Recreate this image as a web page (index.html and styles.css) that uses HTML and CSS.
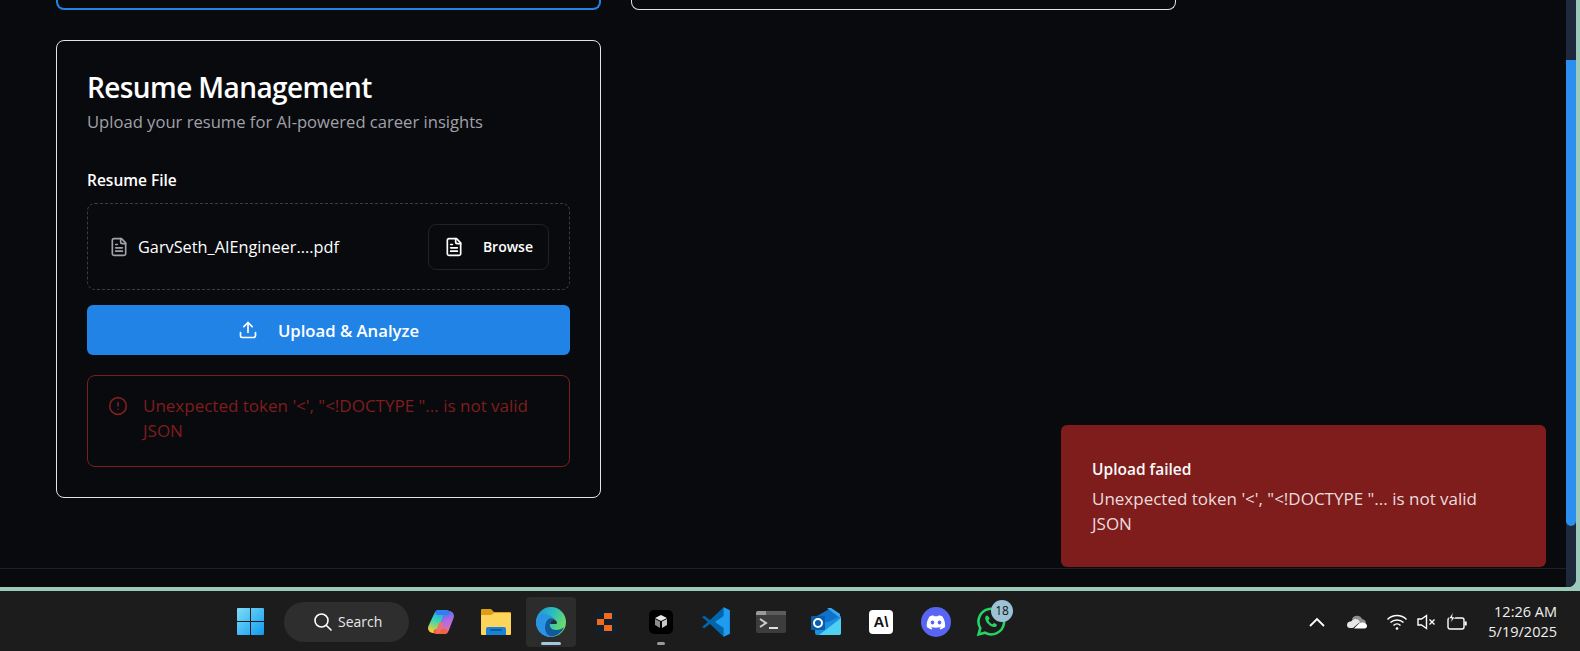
FILE: index.html
```html
<!DOCTYPE html>
<html>
<head>
	<meta charset="utf-8">
	<title>Resume Management</title>
	<link rel="stylesheet" href="styles.css">
</head>
<body>
	<div class="window">
		<div class="page">
			<main class="content">
				<div class="topRow">
					<div class="topCard topCard-blue"></div>
					<div class="topCard"></div>
				</div>
				<section class="card">
					<h2 class="cardTitle">Resume Management</h2>
					<p class="cardSub">Upload your resume for AI-powered career insights</p>
					<div class="fileLabel">Resume File</div>
					<div class="dropBox">
						<div class="fileName">
							<svg class="icon icon-gray" viewBox="0 0 24 24"><path d="M15 2H6a2 2 0 0 0-2 2v16a2 2 0 0 0 2 2h12a2 2 0 0 0 2-2V7z"/><path d="M14 2v4a2 2 0 0 0 2 2h4"/><path d="M16 13H8M16 17H8M10 9H8"/></svg>
							<span>GarvSeth_AIEngineer....pdf</span>
						</div>
						<div class="browseBtn">
							<svg class="icon" viewBox="0 0 24 24"><path d="M15 2H6a2 2 0 0 0-2 2v16a2 2 0 0 0 2 2h12a2 2 0 0 0 2-2V7z"/><path d="M14 2v4a2 2 0 0 0 2 2h4"/><path d="M16 13H8M16 17H8M10 9H8"/></svg>
							<span>Browse</span>
						</div>
					</div>
					<div class="uploadBtn">
						<svg class="icon" viewBox="0 0 24 24"><path d="M21 15v4a2 2 0 0 1-2 2H5a2 2 0 0 1-2-2v-4"/><path d="M17 8l-5-5-5 5"/><path d="M12 3v12"/></svg>
						<span>Upload &amp; Analyze</span>
					</div>
					<div class="errorBox">
						<svg class="icon icon-err" viewBox="0 0 24 24"><circle cx="12" cy="12" r="10"/><path d="M12 8v4M12 16h.01"/></svg>
						<p>Unexpected token '&lt;', "&lt;!DOCTYPE "... is not valid JSON</p>
					</div>
				</section>
			</main>
			<footer class="pageFoot"></footer>
			<div class="toast">
				<div class="toastTitle">Upload failed</div>
				<div class="toastMsg">Unexpected token '&lt;', "&lt;!DOCTYPE "... is not valid JSON</div>
			</div>
		</div>
		<div class="scrollbar"><div class="thumb"></div></div>
	</div>

	<div class="taskbar">
		<div class="slot">
			<svg width="30" height="30" viewBox="0 0 30 30">
				<defs><linearGradient id="win" x1="0" y1="0" x2="1" y2="1"><stop offset="0" stop-color="#7fdcf8"/><stop offset="1" stop-color="#0f9bf0"/></linearGradient></defs>
				<path fill="url(#win)" d="M2 1h12v13H1V2a1 1 0 0 1 1-1zM15 1h12a1 1 0 0 1 1 1v12H15zM1 15h13v13H2a1 1 0 0 1-1-1zM15 15h13v12a1 1 0 0 1-1 1H15z"/>
			</svg>
		</div>
		<div class="searchPill">
			<svg width="20" height="20" viewBox="0 0 20 20" fill="none" stroke="#fff" stroke-width="1.6"><circle cx="8.500" cy="8.500" r="6.500"/><path d="M13.200 13.200l5.300 5.300"/></svg>
			<span>Search</span>
		</div>
		<div class="slot">
			<svg width="30" height="30" viewBox="0 0 30 30" fill="none" stroke-linecap="round">
				<defs>
					<linearGradient id="copA" gradientUnits="userSpaceOnUse" x1="14" y1="4" x2="7" y2="25"><stop offset="0" stop-color="#2a9df0"/><stop offset=".5" stop-color="#3fd8b0"/><stop offset="1" stop-color="#f6cf2e"/></linearGradient>
					<linearGradient id="copB" gradientUnits="userSpaceOnUse" x1="17" y1="5" x2="24" y2="26"><stop offset="0" stop-color="#5a6cf0"/><stop offset=".5" stop-color="#b86be0"/><stop offset="1" stop-color="#f0709a"/></linearGradient>
				</defs>
				<path stroke="url(#copA)" stroke-width="10" d="M13 8L7 21"/>
				<path stroke="url(#copB)" stroke-width="10" d="M23 9L18 22"/>
				<path stroke="#2f7ff0" stroke-width="5" d="M12 5.500h9"/>
				<path stroke="#f0643c" stroke-width="5" d="M10 24.500h9"/>
				<path stroke="#f0706a" stroke-width="4" d="M15 17l-3 7"/>
			</svg>
		</div>
		<div class="slot">
			<svg width="30" height="30" viewBox="0 0 30 30">
				<path fill="#dc9f16" d="M0 3a1 1 0 0 1 1-1h9l3 3h16a1 1 0 0 1 1 1v6H0z"/>
				<path fill="#fdd45c" d="M0 8h10l3-2h16a1 1 0 0 1 1 1v20a1 1 0 0 1-1 1H1a1 1 0 0 1-1-1z"/>
				<path fill="#1683d8" d="M5 28v-6a2 2 0 0 1 2-2h16a2 2 0 0 1 2 2v6z"/>
				<rect x="9" y="22" width="12" height="2" rx="1" fill="#0c5aa0"/>
			</svg>
		</div>
		<div class="slot slot-active">
			<svg width="30" height="30" viewBox="0 0 30 30">
				<defs>
					<linearGradient id="edgeA" x1="0" y1="0" x2="1" y2=".5"><stop offset="0" stop-color="#1b8fe2"/><stop offset=".55" stop-color="#2cc0b8"/><stop offset="1" stop-color="#6fdc68"/></linearGradient>
				</defs>
				<circle cx="15" cy="15" r="15" fill="url(#edgeA)"/>
				<path fill="#2b93e4" d="M0 15C0 9 5 6 10 7c4 1 7 3 8 5-4-2-9 0-9 5 0 5 4 10 10 12-1 .6-3 1-4 1C6 30 0 23 0 15z"/>
				<path fill="#11599f" d="M10 15c1-3 5-5 8-3 2 1 3 3 2 5h-6c-1 3 2 6 6 6 3 0 6-1 8-3-2 6-8 10-14 9-5-2-6-9-4-14z"/>
				<path fill="#2c2c2c" d="M15 15c1-2 4-2 5-1 1 1 1 2 .500 3H14.500z"/>
			</svg>
			<i class="runBar runBar-wide"></i>
		</div>
		<div class="slot">
			<svg width="22" height="24" viewBox="0 0 22 24">
				<rect width="22" height="24" rx="2" fill="#13202c"/>
				<rect x="2" y="9" width="7" height="6" fill="#f26a1b"/>
				<rect x="9" y="3" width="8" height="6" fill="#f26a1b"/>
				<rect x="9" y="15" width="8" height="6" fill="#f26a1b"/>
			</svg>
		</div>
		<div class="slot">
			<svg width="24" height="24" viewBox="0 0 24 24">
				<rect width="24" height="24" rx="5" fill="#000"/>
				<path fill="#e8e8e8" d="M12 5l6 3-6 3-6-3z"/>
				<path fill="#8c8c8c" d="M6 9l5 2.600V18l-5-3z"/>
				<path fill="#c8c8c8" d="M18 9l-5 2.600V18l5-3z"/>
			</svg>
			<i class="runBar"></i>
		</div>
		<div class="slot">
			<svg width="30" height="30" viewBox="0 0 30 30">
				<path fill="#0065a9" d="M28.800 3.300L22.600.300 9 13 3.300 8.700 1 10l5.800 5L1 20l2.300 1.300L9 17l13.600 12.700 6.200-3z"/>
				<path fill="#1f9cf0" d="M22.600.300l6.200 3v23.400l-6.200 3V21L14 15l8.600-6z"/>
			</svg>
		</div>
		<div class="slot">
			<svg width="30" height="22" viewBox="0 0 30 22">
				<rect width="30" height="22" rx="2" fill="#3d3d3d"/>
				<path d="M0 2a2 2 0 0 1 2-2h8v4H0z" fill="#9a9a9a"/>
				<rect x="10" y="0" width="20" height="4" fill="#5c5c5c"/>
				<path d="M4 8l6 4-6 4" fill="none" stroke="#cfcfcf" stroke-width="2"/>
				<rect x="13" y="16" width="9" height="2" fill="#e0e0e0"/>
			</svg>
		</div>
		<div class="slot">
			<svg width="30" height="28" viewBox="0 0 30 28">
				<path fill="#0f72c8" d="M6 8l14-8 9 6v8H6z"/>
				<path fill="#38a8ee" d="M16 0h4l9 6v4z"/>
				<path fill="#1b8fe0" d="M4 14l13 0 13-6v17a2 2 0 0 1-2 2H6a2 2 0 0 1-2-2z"/>
				<path fill="#4fd0f2" d="M30 10v15a2 2 0 0 1-2 2H8z"/>
				<rect y="8" width="14" height="14" rx="1" fill="#0a5cae"/>
				<circle cx="7" cy="15" r="4" fill="none" stroke="#fff" stroke-width="2"/>
			</svg>
		</div>
		<div class="slot">
			<div class="anthro">A\</div>
		</div>
		<div class="slot">
			<svg width="30" height="30" viewBox="0 0 30 30">
				<circle cx="15" cy="15" r="15" fill="#5865f2"/>
				<path fill="#fff" d="M21.500 9.500c-1.200-.6-2.500-1-3.900-1.200l-.5 1c-1.400-.2-2.800-.2-4.200 0l-.5-1c-1.400.2-2.700.6-3.900 1.200-2.400 3.600-3.100 7.100-2.700 10.600 1.600 1.200 3.200 1.900 4.700 2.300l1-1.600c-.6-.2-1.100-.5-1.600-.8l.4-.3c3 1.400 6.300 1.400 9.300 0l.4.3c-.5.300-1 .6-1.600.8l1 1.600c1.500-.4 3.100-1.100 4.700-2.300.4-4-.7-7.500-2.600-10.600z"/>
				<ellipse cx="11.500" cy="15.500" rx="1.800" ry="2" fill="#5865f2"/>
				<ellipse cx="18.500" cy="15.500" rx="1.800" ry="2" fill="#5865f2"/>
			</svg>
		</div>
		<div class="slot">
			<svg width="30" height="30" viewBox="0 0 30 30">
				<path fill="none" stroke="#25d366" stroke-width="2.600" d="M2.500 27.500l1.800-6.400A12.800 12.800 0 1 1 9 25.700z"/>
				<path fill="#25d366" d="M11 8.500c-.5 0-1.500.5-1.800 2-.3 2 1 4.500 3 6.500s4.500 3.300 6.500 3c1.500-.3 2.300-1.300 2.300-2 0-.5-2.500-2-3-2-.5 0-1 1.300-1.600 1.300-1.400-.3-3.500-2.400-4-4 0-.5 1.200-1 1.200-1.600 0-.5-1.400-3.200-2.600-3.200z"/>
			</svg>
			<div class="badge">18</div>
		</div>
		<div class="tray">
			<svg class="trayIcon" viewBox="0 0 20 20" fill="none" stroke="#fff" stroke-width="1.800"><path d="M3 14l7-7 7 7"/></svg>
			<svg class="trayIcon trayIcon-far" viewBox="0 0 20 20"><path fill="#8f8f8f" d="M5 7a5.500 5.500 0 0 1 10 0c2 .3 4 2 4 4H9z"/><path fill="#e6e6e6" d="M0 13a3.500 3.500 0 0 1 4-3.500 5 5 0 0 1 9 .5l-7 6H3c-1.800 0-3-1.300-3-3z"/><path fill="#fff" d="M7 16.500l5.500-5.500c2-1.200 7.500-.8 7.500 3 0 1.500-1 2.500-2.500 2.500z"/></svg>
			<svg class="trayIcon trayIcon-far" viewBox="0 0 20 20" fill="none" stroke="#fff" stroke-width="1.500"><path d="M.5 7.500a13.500 13.500 0 0 1 19 0M3.500 10.500a9.500 9.500 0 0 1 13 0M6.500 13.500a5 5 0 0 1 7 0"/><circle cx="10" cy="16.500" r="1.300" fill="#fff" stroke="none"/></svg>
			<svg class="trayIcon" viewBox="0 0 20 20" fill="none" stroke="#fff" stroke-width="1.400"><path d="M1 7h3.500L9.500 3.500v13L4.500 13H1z"/><path d="M12.500 7.500l5 5M17.500 7.500l-5 5"/></svg>
			<svg class="trayIcon" viewBox="0 0 20 20" fill="none" stroke="#fff" stroke-width="1.400"><rect x="1" y="6" width="16" height="11" rx="2"/><path d="M18.700 9.500v4" stroke-width="2"/><path d="M6 0L2 6.500h2.500L3.500 11 8 5H5.500z" fill="#fff" stroke="#1c1c1c" stroke-width=".7"/></svg>
			<div class="clock">
				<div>12:26 AM</div>
				<div>5/19/2025</div>
			</div>
		</div>
	</div>
</body>
</html>
```

FILE: styles.css
```css
*{
	margin: 0;
	padding: 0;
	box-sizing: border-box;
}
html, body{
	height: 100%;
	overflow: hidden;
}
body{
	display: flex;
	flex-direction: column;
	background: #9ccab9;
	font-family: "Open Sans", "Noto Sans", Arial, sans-serif;
	color: #fff;
}
.window{
	flex: 1;
	min-height: 0;
	display: flex;
	margin: 0 4px 4px 0;
	background: #090a0e;
	border-bottom-right-radius: 8px;
	overflow: hidden;
}
.page{
	flex: 1;
	min-width: 0;
	display: flex;
	flex-direction: column;
	position: relative;
}
.content{
	flex: 1;
	padding: 0 0 0 56px;
}
.topRow{
	display: flex;
	gap: 30px;
}
.topCard{
	width: 545px;
	height: 10px;
	border: 1px solid #e4e4e7;
	border-top: 0;
	border-radius: 0 0 8px 8px;
}
.topCard-blue{
	border: 2px solid #2283e6;
	border-top: 0;
}
.card{
	width: 545px;
	height: 458px;
	margin-top: 30px;
	padding: 30px;
	border: 1px solid #e4e4e7;
	border-radius: 8px;
}
.cardTitle{
	font-size: 28px;
	line-height: 32px;
	font-weight: 600;
	letter-spacing: -0.6px;
}
.cardSub{
	margin-top: 7px;
	font-size: 16.6px;
	line-height: 24px;
	color: #a1a1aa;
}
.fileLabel{
	margin-top: 34px;
	font-size: 15.5px;
	line-height: 24px;
	font-weight: 600;
}
.dropBox{
	display: flex;
	align-items: center;
	justify-content: space-between;
	height: 87px;
	margin-top: 11px;
	padding: 0 20px 0 21px;
	border: 1px dashed #3a3d46;
	border-radius: 8px;
}
.fileName{
	display: flex;
	align-items: center;
	gap: 9px;
	font-size: 16.3px;
}
.icon{
	width: 20px;
	height: 20px;
	flex: none;
	fill: none;
	stroke: currentColor;
	stroke-width: 2;
	stroke-linecap: round;
	stroke-linejoin: round;
}
.icon-gray{
	color: #a1a1aa;
}
.icon-err{
	margin-top: 3px;
	color: #7f1d1d;
}
.browseBtn{
	display: flex;
	align-items: center;
	gap: 19px;
	height: 46px;
	padding: 0 15px;
	border: 1px solid #20222a;
	border-radius: 8px;
	font-size: 14px;
	font-weight: 600;
}
.uploadBtn{
	display: flex;
	align-items: center;
	justify-content: center;
	gap: 20px;
	height: 50px;
	margin-top: 15px;
	background: #2283e6;
	border-radius: 6px;
	font-size: 16.7px;
	font-weight: 600;
}
.errorBox{
	display: flex;
	gap: 15px;
	height: 92px;
	margin-top: 20px;
	padding: 17px 20px;
	border: 1px solid #7f1d1d;
	border-radius: 8px;
	font-size: 17px;
	line-height: 25px;
	color: #7f1d1d;
}
.pageFoot{
	height: 19px;
	border-top: 1px solid #1e2029;
}
.toast{
	position: absolute;
	left: 1061px;
	top: 425px;
	width: 485px;
	height: 142px;
	padding: 32px 35px 31px 31px;
	background: #7f1d1d;
	border-radius: 6px;
}
.toastTitle{
	font-size: 15.5px;
	line-height: 24px;
	font-weight: 600;
	color: #fafafa;
}
.toastMsg{
	margin-top: 5px;
	font-size: 17px;
	line-height: 25px;
	color: #ecdcdc;
}
.scrollbar{
	width: 10px;
	padding-top: 60px;
	background: #1e293b;
}
.thumb{
	height: 466px;
	background: #2b8ff2;
	border-radius: 0 0 5px 5px;
}
.taskbar{
	flex: none;
	display: flex;
	align-items: center;
	gap: 5px;
	height: 60px;
	padding: 1px 0 0 226px;
	background: #1c1c1c;
}
.slot{
	position: relative;
	display: flex;
	align-items: center;
	justify-content: center;
	width: 50px;
	height: 50px;
	border-radius: 4px;
}
.slot-active{
	background: #2c2c2c;
}
.runBar{
	position: absolute;
	left: 50%;
	bottom: 2px;
	width: 8px;
	height: 3px;
	margin-left: -4px;
	background: #9a9a9a;
	border-radius: 2px;
}
.runBar-wide{
	width: 20px;
	margin-left: -10px;
	background: #a5c8d8;
}
.searchPill{
	display: flex;
	align-items: center;
	gap: 5px;
	width: 125px;
	height: 40px;
	margin: 0 2px 0 3px;
	padding-left: 29px;
	background: #2e2e2e;
	border-radius: 20px;
	font-size: 14px;
	color: #e8e8e8;
}
.anthro{
	width: 24px;
	height: 24px;
	background: #fff;
	border-radius: 4px;
	color: #111;
	font-family: "Liberation Sans", Arial, sans-serif;
	font-size: 15px;
	line-height: 24px;
	font-weight: 700;
	text-align: center;
}
.badge{
	position: absolute;
	top: 3px;
	right: 3px;
	width: 22px;
	height: 22px;
	background: #9cc3d5;
	border-radius: 50%;
	color: #111;
	font-size: 12px;
	line-height: 22px;
	text-align: center;
}
.tray{
	display: flex;
	align-items: center;
	gap: 10px;
	margin-left: auto;
	padding-right: 23px;
}
.trayIcon{
	width: 20px;
	height: 20px;
}
.trayIcon-far{
	margin-left: 10px;
}
.clock{
	margin-left: 11px;
	font-size: 14.5px;
	line-height: 20px;
	text-align: right;
	color: #f0f0f0;
}
```
